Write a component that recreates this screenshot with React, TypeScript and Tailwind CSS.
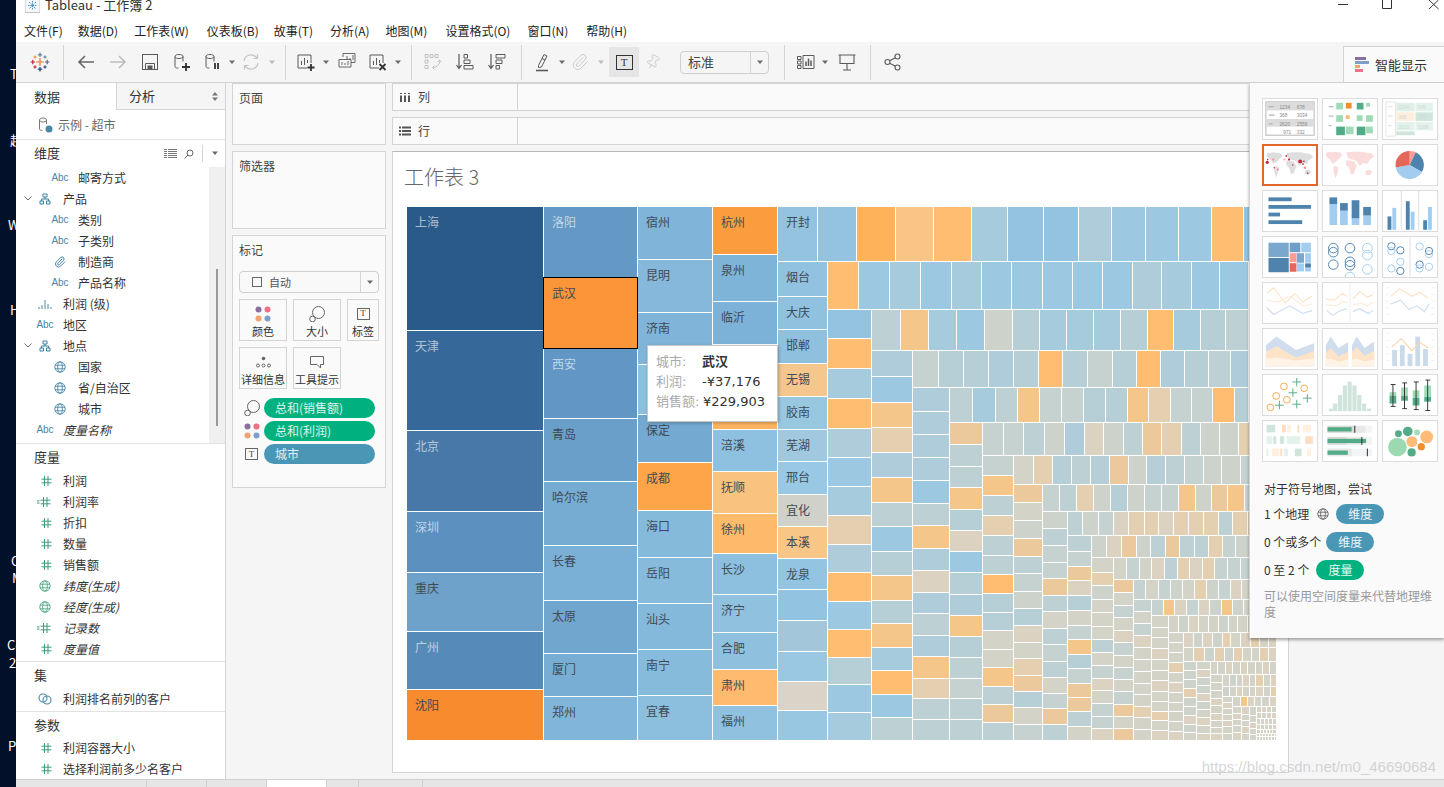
import { Paperclip, Pin } from "lucide-react";
import type { ReactNode } from "react";

const PALETTE: Record<string, string> = {
  b: "#93c3df",
  c: "#9cc9e1",
  d: "#a6cbdd",
  g: "#afccda",
  h: "#b6ced6",
  j: "#bdd0d3",
  k: "#c5d2cf",
  n: "#cdd2ca",
  m: "#d3d3c8",
  f: "#dcd2c1",
  e: "#e4cfb0",
  q: "#ebc99d",
  p: "#f5c68a",
  o: "#febd70",
  O: "#feb25a",
  P: "#f8c586",
};

type Strip = {
  dir: "r" | "c";
  a: number;
  b: number;
  start: number;
  ends: number[];
  colors: string | string[];
  labels?: string[];
};

const s = (
  dir: "r" | "c",
  a: number,
  b: number,
  start: number,
  ends: number[],
  colors: string | string[],
  labels?: string[],
): Strip => ({ dir, a, b, start, ends, colors, labels });

const STRIPS: Strip[] = [
  s("c", 407, 543, 207, [330, 430, 511, 572, 631, 689, 740],
    ["#295a89", "#36699a", "#4878a7", "#5b90bf", "#6ea2ca", "#568ab9", "#f88b2d"],
    ["上海", "天津", "北京", "深圳", "重庆", "广州", "沈阳"]),
  s("c", 544, 637, 207, [277, 348, 418, 481, 545, 600, 653, 696, 740],
    ["#6499c6", "#fa9639", "#6297c5", "#6a9fca", "#76abd2", "#7aafd6", "#71a6cf", "#79aed4", "#81b6da"],
    ["洛阳", "武汉", "西安", "青岛", "哈尔滨", "长春", "太原", "厦门", "郑州"]),
  s("c", 638, 712, 207, [259, 312, 364, 414, 462, 510, 557, 603, 649, 695, 740],
    ["#80b5d9", "#85b8db", "#80b4d9", "#8dbfdf", "#74a9d1", "#fda548", "#86bada", "#86bbdc", "#85b9db", "#87bbdc", "#8cbfde"],
    ["宿州", "昆明", "济南", "", "保定", "成都", "海口", "岳阳", "汕头", "南宁", "宜春"]),
  s("c", 713, 777, 207, [254, 301, 344, 387, 429, 471, 513, 553, 594, 632, 669, 705, 740],
    ["#fb9c3f", "#7fb4d9", "#7db2d8", "#88bbdc", "#fdb35f", "#8ec0df", "#f9c27f", "#feba6b", "#8dbfde", "#90c2e0", "#8fc1df", "#feba6e", "#90c2df"],
    ["杭州", "泉州", "临沂", "", "", "涪溪", "抚顺", "徐州", "长沙", "济宁", "合肥", "肃州", "福州"]),
  s("r", 207, 261, 778, [817, 856, 895, 933, 971, 1007, 1043, 1078, 1111, 1145, 1178, 1211, 1243, 1276],
    "bbOPodbbgcccob", ["开封"]),
  s("c", 778, 827, 262, [296, 329, 363, 396, 429, 461, 494, 526, 558, 589, 620, 651, 681, 710, 740],
    ["#91c2df", "#90c1df", "#8fc1df", "#f5c78c", "#98c8e0", "#a0c9e0", "#98c8e3", "#d0d1c8", "#f8c686", "#93c4e1", "#92c3e1", "#a3c6da", "#9ac8e2", "#dad4c8", "#97c7e1"],
    ["烟台", "大庆", "邯郸", "无锡", "胶南", "芜湖", "邢台", "宜化", "本溪", "龙泉"]),
  s("r", 262, 309, 828, [858, 889, 920, 951, 981, 1011, 1042, 1072, 1102, 1132, 1161, 1191, 1219, 1248, 1276], "ocdcdcccccgdcc"),
  s("c", 828, 871, 310, [338, 368, 398, 428, 457, 486, 515, 544, 572, 601, 629, 657, 684, 712, 740], "bodogcdegocohcd"),
  s("r", 310, 350, 872, [900, 928, 956, 984, 1012, 1039, 1066, 1093, 1120, 1147, 1173, 1200, 1225, 1248, 1276], "jpdcnhdddhodhjj"),
  s("c", 872, 912, 351, [376, 402, 427, 452, 477, 502, 526, 551, 575, 600, 623, 647, 670, 694, 717, 740], "gcpegpjchphpdocj"),
  s("r", 351, 387, 913, [938, 963, 988, 1013, 1038, 1062, 1087, 1112, 1136, 1160, 1184, 1208, 1230, 1248, 1276], "khhghohkhoghjgj"),
  s("c", 913, 949, 388, [411, 434, 457, 480, 503, 525, 548, 570, 592, 613, 635, 656, 678, 698, 719, 740], "ggggcjpgfgjgpejj"),
  s("r", 388, 422, 950, [972, 995, 1017, 1039, 1061, 1083, 1105, 1127, 1148, 1170, 1191, 1212, 1234, 1248, 1276], "jdjpkkhhpekkohh"),
  s("c", 950, 982, 423, [444, 466, 487, 509, 530, 551, 572, 594, 615, 636, 657, 678, 698, 719, 740], "qjjphfchgphjkjj"),
  s("r", 423, 455, 983, [1003, 1023, 1044, 1064, 1084, 1103, 1123, 1142, 1161, 1181, 1200, 1219, 1238, 1276], "kkjngfnjqejnne"),
  s("c", 983, 1013, 456, [475, 495, 515, 535, 555, 574, 593, 612, 630, 649, 667, 686, 704, 722, 740], "kpjejjohhmmpjqj"),
  s("r", 456, 484, 1014, [1033, 1052, 1071, 1090, 1109, 1128, 1146, 1165, 1184, 1203, 1221, 1240, 1276], "mehjhqnhjknnk"),
  s("c", 1014, 1042, 485, [502, 520, 538, 556, 573, 591, 608, 625, 642, 658, 675, 691, 707, 724, 740], "qmnqjknhfmeqhmk"),
  s("r", 485, 511, 1043, [1059, 1076, 1093, 1110, 1127, 1144, 1161, 1178, 1195, 1211, 1227, 1244, 1276], "kjenhnkkpnqpk"),
  s("c", 1043, 1067, 512, [528, 545, 562, 578, 595, 611, 628, 644, 661, 677, 693, 708, 724, 740], "njkkqjmjkjmkqj"),
  s("r", 512, 535, 1068, [1082, 1098, 1113, 1128, 1144, 1158, 1173, 1188, 1203, 1218, 1232, 1247, 1276], "jnkfeefeeejee"),
  s("c", 1068, 1091, 536, [551, 566, 580, 595, 610, 625, 639, 654, 668, 683, 697, 711, 726, 740], "jkqfhmkphkqqjm"),
  s("r", 536, 557, 1092, [1106, 1121, 1136, 1150, 1165, 1179, 1194, 1208, 1222, 1235, 1276], "nfqnjqjjekn"),
  s("c", 1092, 1113, 558, [572, 585, 599, 612, 626, 639, 652, 665, 678, 690, 703, 716, 728, 740], "menmmmjmkfmkkf"),
  s("r", 558, 579, 1114, [1126, 1139, 1151, 1164, 1177, 1189, 1202, 1214, 1227, 1240, 1276], "mkmfjefekkk"),
  s("c", 1114, 1133, 580, [592, 605, 617, 630, 642, 655, 667, 679, 691, 704, 716, 728, 740], "qmkmfkmkmkqmq"),
  s("r", 580, 599, 1134, [1145, 1158, 1170, 1182, 1194, 1206, 1218, 1230, 1241, 1276], "kmknmenkfm"),
  s("c", 1134, 1151, 600, [611, 623, 635, 647, 659, 671, 683, 694, 706, 717, 729, 740], "kmkfmmmmmemm"),
  s("r", 600, 615, 1152, [1163, 1174, 1186, 1198, 1209, 1221, 1232, 1243, 1276], "kpfkfnpnm"),
  s("c", 1152, 1168, 616, [627, 637, 648, 659, 670, 680, 691, 701, 711, 720, 730, 740], "mmmfmmfmmemf"),
  s("r", 616, 632, 1169, [1178, 1188, 1198, 1208, 1218, 1228, 1237, 1247, 1276], "mnfmmnmmm"),
  s("c", 1169, 1183, 633, [642, 652, 662, 672, 682, 692, 702, 711, 721, 731, 740], "mmmemfmmmmf"),
  s("r", 633, 647, 1184, [1193, 1202, 1212, 1222, 1230, 1240, 1250, 1259, 1268, 1276], "fnfnemfemf"),
  s("r", 648, 661, 1184, [1193, 1204, 1214, 1224, 1233, 1242, 1251, 1259, 1268, 1276], "menenemmef"),
  s("c", 1184, 1196, 662, [670, 679, 688, 697, 706, 715, 724, 732, 740], "nnnennfnm"),
  s("c", 1197, 1210, 662, [669, 677, 685, 693, 701, 709, 717, 725, 733, 740], "mfnnfnmfmf"),
  s("r", 662, 674, 1211, [1217, 1225, 1232, 1240, 1247, 1255, 1262, 1269, 1276], "mmfmfmmfm"),
  s("c", 1211, 1222, 675, [682, 690, 698, 705, 713, 720, 727, 733, 740], "mmmfmfmmf"),
  s("r", 675, 686, 1223, [1229, 1236, 1242, 1249, 1255, 1263, 1270, 1276], "mnmfmemf"),
  s("r", 687, 696, 1223, [1229, 1236, 1242, 1249, 1255, 1263, 1270, 1276], "nmfmmfme"),
  s("c", 1223, 1232, 697, [702, 708, 714, 720, 726, 733, 740], "mfmmfmm"),
  s("r", 697, 706, 1233, [1240, 1247, 1254, 1261, 1269, 1276], "mpfmmf"),
  s("c", 1233, 1241, 707, [713, 719, 725, 732, 740], "mfmmf"),
  s("c", 1242, 1249, 707, [714, 720, 726, 733, 740], "fmmfm"),
  s("c", 1250, 1256, 707, [715, 722, 728, 734, 740], "mmfmm"),
  s("r", 707, 712, 1257, [1261, 1266, 1271, 1276], "mfmm"),
  s("r", 713, 718, 1257, [1261, 1266, 1271, 1276], "fmmf"),
  s("r", 719, 724, 1257, [1260, 1264, 1268, 1272, 1276], "mmfmm"),
  s("r", 725, 729, 1257, [1260, 1264, 1268, 1272, 1276], "fmmmf"),
  s("r", 730, 733, 1257, [1260, 1263, 1266, 1269, 1272, 1276], "mmfmm"),
  s("r", 734, 736, 1257, [1259, 1262, 1265, 1268, 1271, 1274, 1276], "mfmmfm"),
  s("r", 737, 740, 1257, [1259, 1262, 1265, 1268, 1271, 1274, 1276], "mmmfmm"),
];

const LIGHT_LABELS = ["上海", "天津", "北京", "深圳", "广州", "洛阳", "西安"];

function Treemap() {
  const rects: ReactNode[] = [];
  const texts: ReactNode[] = [];
  STRIPS.forEach((st, i) => {
    let cur = st.start;
    st.ends.forEach((end, j) => {
      const raw = st.colors[j % st.colors.length];
      const fill = raw.length === 1 ? PALETTE[raw] : raw;
      const x = st.dir === "c" ? st.a : cur;
      const y = st.dir === "c" ? cur : st.a;
      const w = st.dir === "c" ? st.b - st.a : end - cur;
      const h = st.dir === "c" ? end - cur : st.b - st.a;
      rects.push(<rect key={`${i}-${j}`} x={x} y={y} width={w} height={h} fill={fill} />);
      const label = st.labels?.[j];
      if (label) {
        texts.push(
          <text
            key={label}
            x={x + 8}
            y={y + 20}
            fontSize={12}
            fill={LIGHT_LABELS.includes(label) ? "rgba(255,255,255,0.62)" : "#3f4a55"}
          >
            {label}
          </text>,
        );
      }
      cur = end + 1;
    });
  });
  return (
    <svg className="block" width={870} height={534} viewBox="407 207 870 534">
      <g shapeRendering="crispEdges">{rects}</g>
      <rect x={543.5} y={277.5} width={94} height={71} fill="none" stroke="#000" strokeWidth={1} shapeRendering="crispEdges" />
      {texts}
    </svg>
  );
}

/* ---- toolbar icons ---- */

function Ico({ children, w = 20, h = 20 }: { children: ReactNode; w?: number; h?: number }) {
  return (
    <svg width={w} height={h} viewBox={`0 0 ${w} ${h}`} fill="none" stroke="#5a5a5a" strokeWidth={1}>
      {children}
    </svg>
  );
}

function Plus({ x, y, r, c }: { x: number; y: number; r: number; c: string }) {
  return <path d={`M${x - r} ${y}H${x + r}M${x} ${y - r}V${y + r}`} stroke={c} strokeWidth={1.2} fill="none" />;
}

function TableauLogo() {
  return (
    <svg width={20} height={20} viewBox="0 0 20 20">
      <Plus x={10} y={10} r={4} c="#e8762b" />
      <Plus x={10} y={2.8} r={2.2} c="#5b879b" />
      <Plus x={10} y={17.2} r={2.2} c="#1f447b" />
      <Plus x={2.8} y={10} r={2.2} c="#c72037" />
      <Plus x={17.2} y={10} r={2.2} c="#5b6591" />
      <Plus x={5} y={5} r={1.6} c="#eb9129" />
      <Plus x={15} y={5} r={1.6} c="#59879b" />
      <Plus x={5} y={15} r={1.6} c="#c72037" />
      <Plus x={15} y={15} r={1.6} c="#1f447b" />
    </svg>
  );
}

function Cylinder() {
  return <path d="M3 4.5C3 3 5 2.5 7 2.5s4 .5 4 2v5M3 4.5c0 1.5 2 2 4 2s4-.5 4-2M3 4.5v10c0 1 1 1.5 2.5 1.5h1" />;
}

function BarsBox() {
  return <path d="M11 16H2V3h13v8M5.5 13V9M8.5 13V6M11.5 11V8" />;
}

function Caret({ light }: { light?: boolean }) {
  return (
    <svg width={8} height={5} viewBox="0 0 8 5" className="shrink-0">
      <path d="M1 0.5h6L4 4z" fill={light ? "#bdbdbd" : "#6a6a6a"} />
    </svg>
  );
}

function Sep({ className }: { className: string }) {
  return <div className={`h-[35px] w-px shrink-0 bg-[#d4d4d4] ${className}`} />;
}

function Toolbar() {
  return (
    <div className="flex h-[41px] shrink-0 items-center border-b border-[#d4d4d4] bg-[#f5f5f5]">
      <div className="flex w-[47px] shrink-0 justify-center"><TableauLogo /></div>
      <Sep className="" />
      <div className="ml-[6px] flex w-[32px] shrink-0 justify-center">
        <svg width={18} height={16} viewBox="0 0 18 16" fill="none" stroke="#666" strokeWidth={1.6}><path d="M17 8H2M8 2L2 8l6 6" /></svg>
      </div>
      <div className="flex w-[32px] shrink-0 justify-center">
        <svg width={18} height={16} viewBox="0 0 18 16" fill="none" stroke="#bdbdbd" strokeWidth={1.6}><path d="M1 8h15M10 2l6 6-6 6" /></svg>
      </div>
      <div className="flex w-[32px] shrink-0 justify-center">
        <Ico w={18} h={18}>
          <rect x={1.5} y={1.5} width={15} height={15} />
          <path d="M4.5 16.5V10.5h9v6" />
          <rect x={6.5} y={12.5} width={5} height={4} fill="#5a5a5a" stroke="none" />
        </Ico>
      </div>
      <div className="flex w-[31px] shrink-0 justify-center">
        <Ico>
          <Cylinder />
          <path d="M14 11v8M10 15h8" stroke="#333" strokeWidth={1.8} />
        </Ico>
      </div>
      <div className="flex w-[31px] shrink-0 justify-center">
        <Ico>
          <Cylinder />
          <path d="M12 11v6M15 11v6" stroke="#333" strokeWidth={1.8} />
        </Ico>
      </div>
      <div className="flex w-[8px] shrink-0 justify-center"><Caret /></div>
      <div className="flex w-[30px] shrink-0 justify-center">
        <Ico w={18} h={18}>
          <path d="M2 8a7 7 0 0 1 12-4l1.5 1.5M16 10a7 7 0 0 1-12 4L2.5 12.500M15.500 1.500v4h-4M2.500 16.500v-4h4" stroke="#c4c4c4" strokeWidth={1.2} />
        </Ico>
      </div>
      <div className="ml-[2px] flex w-[8px] shrink-0 justify-center"><Caret light /></div>
      <Sep className="ml-[9px]" />
      <div className="ml-[4px] flex w-[32px] shrink-0 justify-center">
        <Ico>
          <BarsBox />
          <path d="M15 12v7M11.500 15.500h7" stroke="#333" strokeWidth={1.8} />
        </Ico>
      </div>
      <div className="flex w-[8px] shrink-0 justify-center"><Caret /></div>
      <div className="ml-[1px] flex w-[31px] shrink-0 justify-center">
        <Ico>
          <path d="M6 5V1.500h12v9h-4M2 7.500h12V15H2zM5 13v-3M8 13v-2M11 13v-4M10 8V4M13 8V6M16 8V3" strokeWidth={0.9} />
        </Ico>
      </div>
      <div className="flex w-[32px] shrink-0 justify-center">
        <Ico>
          <BarsBox />
          <path d="M11.500 12l6 6M17.500 12l-6 6" stroke="#333" strokeWidth={1.8} />
        </Ico>
      </div>
      <div className="flex w-[8px] shrink-0 justify-center"><Caret /></div>
      <Sep className="ml-[9px]" />
      <div className="ml-[5px] flex w-[32px] shrink-0 justify-center">
        <Ico>
          <path d="M2 2.500h3v3H2zM7 2.500h3v3H7zM12 2.500h3v3h-3zM2 8h3v3H2zM2 13.500h3v3H2z" stroke="#c0c0c0" />
          <path d="M16.500 8c.8 4-2 7-6.500 7.500M11.500 13.500L9.500 15.500l2 2M15 10l1.500-2 1.500 2" stroke="#c0c0c0" />
        </Ico>
      </div>
      <div className="flex w-[32px] shrink-0 justify-center">
        <Ico>
          <path d="M4 2v14M1.500 13L4 16.500 6.500 13" strokeWidth={1.2} />
          <path d="M9 2.500h3.500v3.500H9zM9 8h6v3.500H9zM9 13.500h9v3.500H9z" />
        </Ico>
      </div>
      <div className="flex w-[32px] shrink-0 justify-center">
        <Ico>
          <path d="M4 2v14M1.500 13L4 16.500 6.500 13" strokeWidth={1.2} />
          <path d="M9 2.500h9v3.500H9zM9 8h6v3.500H9zM9 13.500h3.500v3.500H9z" />
        </Ico>
      </div>
      <Sep className="ml-[8px]" />
      <div className="ml-[6px] flex w-[30px] shrink-0 justify-center">
        <Ico>
          <path d="M5.500 13.500L11 2.500l3 1.500-5.500 11-3 .5zM9 6.500l3 1.500" />
          <path d="M3 18.500h12" strokeWidth={1.6} />
        </Ico>
      </div>
      <div className="flex w-[8px] shrink-0 justify-center"><Caret /></div>
      <div className="flex w-[28px] shrink-0 justify-center">
        <Paperclip size={18} color="#c6c6c6" strokeWidth={1.2} />
      </div>
      <div className="ml-[3px] flex w-[8px] shrink-0 justify-center"><Caret light /></div>
      <div className="ml-[4px] flex h-[30px] w-[30px] shrink-0 items-center justify-center bg-[#e6e6e6]">
        <div className="flex h-[15px] w-[17px] items-center justify-center border border-[#333] font-['Liberation_Serif',serif] text-[11px] leading-none text-[#333]">T</div>
      </div>
      <div className="flex w-[28px] shrink-0 justify-center">
        <Pin size={16} color="#c6c6c6" strokeWidth={1.2} className="rotate-[30deg]" />
      </div>
      <div className="ml-[13px] flex h-[23px] w-[89px] shrink-0 items-center rounded-sm border border-[#cfcfcf] bg-[#f5f5f5]">
        <span className="flex-1 pl-[7px] text-[13px] text-[#444]">标准</span>
        <div className="flex h-full w-[18px] items-center justify-center border-l border-[#d4d4d4]"><Caret /></div>
      </div>
      <Sep className="ml-[15px]" />
      <div className="ml-[6px] flex w-[30px] shrink-0 justify-center">
        <Ico>
          <path d="M1.500 4.500h3.500v3H1.500zM1.500 9h3.500v3H1.500zM1.500 13.500h3.500v3H1.500zM7 3.500h11v13H7z" />
          <path d="M10 14V9.500M12.500 14V6.500M15 14V8.500" strokeWidth={1.5} />
        </Ico>
      </div>
      <div className="flex w-[8px] shrink-0 justify-center"><Caret /></div>
      <div className="ml-[2px] flex w-[32px] shrink-0 justify-center">
        <Ico>
          <path d="M1.500 3h17M3 3v8.500h14V3M10 11.500v6.500M6 18h8" strokeWidth={1.1} />
        </Ico>
      </div>
      <Sep className="ml-[7px]" />
      <div className="ml-[6px] flex w-[32px] shrink-0 justify-center">
        <Ico>
          <circle cx={14.500} cy={4.500} r={2.500} strokeWidth={1.1} />
          <circle cx={14.500} cy={15.500} r={2.500} strokeWidth={1.1} />
          <circle cx={4.500} cy={10} r={2.500} strokeWidth={1.1} />
          <path d="M6.700 8.800l5.600-3.100M6.700 11.200l5.600 3.100" strokeWidth={1.1} />
        </Ico>
      </div>
      <div className="ml-auto flex h-[36px] w-[101px] shrink-0 items-center gap-[6px] self-end border-l border-t border-[#d4d4d4] bg-[#fafafa] pl-[11px]">
        <div className="flex flex-col gap-px">
          <div className="h-[3px] w-[11px] bg-[#8a6f9e]" />
          <div className="h-[3px] w-[14px] bg-[#7f9fc9]" />
          <div className="h-[3px] w-[5px] bg-[#f0a46c]" />
          <div className="h-[3px] w-[8px] bg-[#ef7088]" />
        </div>
        <span className="text-[13px] text-[#333]">智能显示</span>
      </div>
    </div>
  );
}

/* ---- data pane ---- */

function Abc() {
  return <span className="font-['Liberation_Sans',sans-serif] text-[10px] leading-none text-[#4a86a6]">Abc</span>;
}

function Hier() {
  return (
    <svg width={12} height={12} viewBox="0 0 12 12" fill="none" stroke="#3d7fa0">
      <path d="M4 1h4v3H4zM1 8h3.500v3H1zM7.500 8H11v3H7.500zM6 4v2M2.500 8V6h7v2" />
    </svg>
  );
}

function Globe({ c = "#4a88a8" }: { c?: string }) {
  return (
    <svg width={12} height={12} viewBox="0 0 12 12" fill="none" stroke={c} strokeWidth={0.9}>
      <circle cx={6} cy={6} r={5.200} />
      <ellipse cx={6} cy={6} rx={2.300} ry={5.200} />
      <path d="M1 4.200h10M1 7.800h10" />
    </svg>
  );
}

function Hash({ eq }: { eq?: boolean }) {
  return (
    <svg width={14} height={10} viewBox="0 0 14 10" fill="none" stroke="#3d9c7c" className={eq ? "-ml-[3px]" : ""}>
      <path d="M6.500 0v10M10 0v10M3.500 3.200h10M3.500 6.800h10" />
      {eq && <path d="M0 3.900h2.500M0 6.100h2.500" />}
    </svg>
  );
}

function LevelBars() {
  return (
    <svg width={14} height={10} viewBox="0 0 14 10" stroke="#4a88a8">
      <path d="M1 10V8M4 10V6M7 10V1M10 10V5M13 10V8" />
    </svg>
  );
}

function SetIcon() {
  return (
    <svg width={14} height={12} viewBox="0 0 14 12" fill="none" stroke="#4a88a8" strokeWidth={1.1}>
      <circle cx={5} cy={5} r={4} />
      <circle cx={9} cy={7} r={4} />
    </svg>
  );
}

function Chevron() {
  return (
    <svg width={8} height={5} viewBox="0 0 8 5" fill="none" stroke="#666">
      <path d="M.5.500L4 4 7.500.500" />
    </svg>
  );
}

function Row({
  icon,
  label,
  nested,
  italic,
  open,
}: {
  icon: ReactNode;
  label: string;
  nested?: boolean;
  italic?: boolean;
  open?: boolean;
}) {
  return (
    <div className="flex h-[21px] items-center pl-[8px]">
      <div className="flex w-[12px] shrink-0 items-center">{open && <Chevron />}</div>
      {nested && <div className="w-[15px] shrink-0" />}
      <div className="mr-[9px] flex w-[18px] shrink-0 items-center justify-center">{icon}</div>
      <span className={`whitespace-nowrap text-[12px] text-[#333] ${italic ? "italic" : ""}`}>{label}</span>
    </div>
  );
}

function Header({ label, className }: { label: string; className: string }) {
  return <div className={`flex items-center pl-[18px] text-[13px] text-[#333] ${className}`}>{label}</div>;
}

function DataPane() {
  return (
    <div className="h-full w-[210px] shrink-0 overflow-hidden border-r border-[#d4d4d4] bg-white">
      <div className="flex h-[27px]">
        <div className="flex w-[100px] items-center pl-[18px] text-[13px] text-[#333]">数据</div>
        <div className="flex flex-1 items-center justify-between border-b border-l border-[#d4d4d4] bg-[#f5f5f5] pl-[12px] pr-[7px] text-[13px] text-[#333]">
          <span>分析</span>
          <svg width={6} height={9} viewBox="0 0 6 9" fill="#777"><path d="M0 3.500L3 0l3 3.500zM0 5.500L3 9l3-3.500z" /></svg>
        </div>
      </div>
      <div className="flex h-[30px] items-center gap-[3px] border-b border-[#e2e2e2] pl-[22px] text-[12px] text-[#666]">
        <svg width={17} height={16} viewBox="0 0 17 16" fill="none" stroke="#777">
          <path d="M1.500 3c0-1.500 2-2 3.500-2s3.500.5 3.500 2v4M1.500 3c0 1.500 2 2 3.500 2s3.500-.5 3.500-2M1.500 3v9c0 1 1.500 1.500 3 1.500" />
          <circle cx={11} cy={12} r={3.500} fill="#4a88a8" stroke="none" />
        </svg>
        <span>示例 - 超市</span>
      </div>
      <div className="flex h-[27px] items-center pr-[6px]">
        <Header label="维度" className="flex-1 pb-[1px]" />
        <svg width={13} height={9} viewBox="0 0 13 9" stroke="#777" className="mr-[7px]"><path d="M0 .5h3M0 2.500h3M0 4.500h3M0 6.500h3M0 8.500h3M4 .5h9M4 2.500h9M4 4.500h9M4 6.500h9M4 8.500h9" /></svg>
        <svg width={10} height={10} viewBox="0 0 10 10" fill="none" stroke="#666" className="mr-[8px]"><circle cx={6} cy={4} r={3} /><path d="M4 6L.5 9.500" /></svg>
        <div className="mr-[8px] h-[17px] w-px bg-[#d4d4d4]" />
        <Caret />
      </div>
      <div className="flex h-[277px] border-b border-[#e2e2e2]">
        <div className="flex-1">
          <Row icon={<Abc />} nested label="邮寄方式" />
          <Row icon={<Hier />} open label="产品" />
          <Row icon={<Abc />} nested label="类别" />
          <Row icon={<Abc />} nested label="子类别" />
          <Row
            icon={<Paperclip size={12} color="#4a88a8" />}
            nested
            label="制造商"
          />
          <Row icon={<Abc />} nested label="产品名称" />
          <Row icon={<LevelBars />} label="利润 (级)" />
          <Row icon={<Abc />} label="地区" />
          <Row icon={<Hier />} open label="地点" />
          <Row icon={<Globe />} nested label="国家" />
          <Row icon={<Globe />} nested label="省/自治区" />
          <Row icon={<Globe />} nested label="城市" />
          <Row icon={<Abc />} italic label="度量名称" />
        </div>
        <div className="w-[16px] shrink-0 bg-[#f0f0f0] pl-[7px] pt-[102px]">
          <div className="h-[157px] w-[2px] bg-[#999]" />
        </div>
      </div>
      <Header label="度量" className="h-[26px]" />
      <div className="border-b border-[#e2e2e2] pb-[2px]">
        <Row icon={<Hash />} label="利润" />
        <Row icon={<Hash eq />} label="利润率" />
        <Row icon={<Hash />} label="折扣" />
        <Row icon={<Hash />} label="数量" />
        <Row icon={<Hash />} label="销售额" />
        <Row icon={<Globe c="#4fa885" />} italic label="纬度(生成)" />
        <Row icon={<Globe c="#4fa885" />} italic label="经度(生成)" />
        <Row icon={<Hash eq />} italic label="记录数" />
        <Row icon={<Hash />} italic label="度量值" />
      </div>
      <Header label="集" className="h-[26px]" />
      <div className="border-b border-[#e2e2e2] pb-[2px]">
        <Row icon={<SetIcon />} label="利润排名前列的客户" />
      </div>
      <Header label="参数" className="h-[25px]" />
      <Row icon={<Hash />} label="利润容器大小" />
      <Row icon={<Hash />} label="选择利润前多少名客户" />
    </div>
  );
}

/* ---- marks card ---- */

function ColorDots() {
  return (
    <svg width={16} height={16} viewBox="0 0 16 16">
      <circle cx={3.500} cy={3.500} r={3} fill="#8a6f9e" />
      <circle cx={12.500} cy={3.500} r={3} fill="#ef6f84" />
      <circle cx={3.500} cy={12.500} r={3} fill="#f0a270" />
      <circle cx={12.500} cy={12.500} r={3} fill="#7f9fc9" />
    </svg>
  );
}

function SizeIcon() {
  return (
    <svg width={16} height={16} viewBox="0 0 16 16" fill="none" stroke="#666">
      <circle cx={9.500} cy={6.500} r={6} />
      <circle cx={3.500} cy={13} r={2.800} fill="#fafafa" />
    </svg>
  );
}

function TIcon() {
  return (
    <div className="flex h-[12px] w-[13px] items-center justify-center border border-[#666] font-['Liberation_Serif',serif] text-[9px] leading-none text-[#444]">T</div>
  );
}

function MarkBtn({ icon, label, className }: { icon: ReactNode; label: string; className: string }) {
  return (
    <div className={`flex h-[42px] flex-col items-center justify-between border border-[#d4d4d4] pb-[2px] pt-[5px] ${className}`}>
      <div className="flex h-[17px] items-center">{icon}</div>
      <span className="whitespace-nowrap text-[11px] leading-[14px] text-[#333]">{label}</span>
    </div>
  );
}

function Pill({ label, blue }: { label: string; blue?: boolean }) {
  return (
    <div className={`flex h-[20px] w-[111px] items-center rounded-full pl-[11px] text-[12px] text-white/85 ${blue ? "bg-[#4a96b5]" : "bg-[#00b180]"}`}>
      {label}
    </div>
  );
}

function MiddlePane() {
  return (
    <div className="h-full w-[166px] shrink-0 px-[6px]">
      <div className="h-[62px] border border-[#d4d4d4] bg-[#fafafa] pl-[6px] pt-[5px] text-[12px] text-[#444]">页面</div>
      <div className="mt-[6px] h-[78px] border border-[#d4d4d4] bg-[#fafafa] pl-[6px] pt-[5px] text-[12px] text-[#444]">筛选器</div>
      <div className="mt-[6px] h-[253px] border border-[#d4d4d4] bg-[#fafafa] px-[6px]">
        <div className="flex h-[35px] items-center pb-[7px] text-[12px] text-[#444]">标记</div>
        <div className="flex h-[22px] items-center rounded-sm border border-[#cfcfcf] bg-[#f9f9f9]">
          <div className="ml-[12px] h-[10px] w-[10px] border border-[#666]" />
          <span className="ml-[7px] flex-1 text-[11px] text-[#555]">自动</span>
          <div className="flex h-full w-[18px] items-center justify-center border-l border-[#d4d4d4]"><Caret /></div>
        </div>
        <div className="mt-[6px] flex gap-[6px]">
          <MarkBtn icon={<ColorDots />} label="颜色" className="w-[48px]" />
          <MarkBtn icon={<SizeIcon />} label="大小" className="w-[48px]" />
          <MarkBtn icon={<TIcon />} label="标签" className="w-[32px]" />
        </div>
        <div className="mt-[6px] flex gap-[6px]">
          <MarkBtn
            icon={
              <svg width={15} height={12} viewBox="0 0 15 12" fill="none" stroke="#666">
                <circle cx={7.500} cy={2.500} r={1.800} fill="#666" stroke="none" />
                <circle cx={2} cy={9.500} r={1.500} />
                <circle cx={7.500} cy={9.500} r={1.500} />
                <circle cx={13} cy={9.500} r={1.500} />
              </svg>
            }
            label="详细信息"
            className="w-[48px]"
          />
          <MarkBtn
            icon={
              <svg width={16} height={14} viewBox="0 0 16 14" fill="none" stroke="#666">
                <path d="M1.500 1.500h13v8h-3v3.500L8 9.500H1.500z" />
              </svg>
            }
            label="工具提示"
            className="w-[48px]"
          />
        </div>
        <div className="mt-[9px] flex flex-col gap-[3px]">
          <div className="flex items-center">
            <div className="flex w-[25px] justify-center"><SizeIcon /></div>
            <Pill label="总和(销售额)" />
          </div>
          <div className="flex items-center">
            <div className="flex w-[25px] justify-center"><ColorDots /></div>
            <Pill label="总和(利润)" />
          </div>
          <div className="flex items-center">
            <div className="flex w-[25px] justify-center"><TIcon /></div>
            <Pill blue label="城市" />
          </div>
        </div>
      </div>
    </div>
  );
}

/* ---- show me thumbs ---- */

const DARK = "#4e83ae";
const LITE = "#a3cdf0";
const GREEN = "#54ab88";
const MINT = "#9fdcb6";

function Thumb({ children, active }: { children: ReactNode; active?: boolean }) {
  return (
    <div className={`h-[42px] w-[56px] bg-white ${active ? "border-2 border-[#e0672d]" : "border border-[#dcdcdc]"}`}>
      <svg className="h-full w-full" viewBox="0 0 56 42" preserveAspectRatio="none">
        {children}
      </svg>
    </div>
  );
}

function World({ fill }: { fill: string }) {
  return (
    <g fill={fill}>
      <path d="M3 8l7-1 8 1 2 3-4 4-3 3-3 2-3-5-4-3z" />
      <path d="M11 22l5 1-1 7-2 5-2-7z" />
      <path d="M24 8l6-1h10l10 2 3 3-5 4-2 4-4-1-4 3-3-5-5-2-4-1z" />
      <path d="M24 16l8 1 3 5-3 8-3 1-2-7-3-3z" />
      <path d="M44 27l5-1 2 3-3 3-4-1z" />
    </g>
  );
}

function Poly({ pts, c, w = 1.200 }: { pts: string; c: string; w?: number }) {
  return <polyline points={pts} fill="none" stroke={c} strokeWidth={w} />;
}

function ThumbGrid() {
  return (
    <div className="grid grid-cols-[56px_56px_56px] gap-x-[4px] gap-y-[4px]">
      <Thumb>
        <rect x={3} y={3} width={50} height={35} fill="#fff" stroke="#b3b3b3" />
        <rect x={3.500} y={3.500} width={49} height={8.500} fill="#dcdcdc" />
        <rect x={3.500} y={21} width={49} height={8} fill="#dcdcdc" />
        <path d="M6 8h5M6 17h6M6 26h4" stroke="#b3b3b3" strokeWidth={1.300} />
        <g fontSize={5} fill="#8a8a8a" fontFamily="Liberation Sans, sans-serif">
          <text x={17} y={10}>1234</text><text x={35} y={10}>678</text>
          <text x={17} y={19}>368</text><text x={35} y={19}>3034</text>
          <text x={17} y={28}>2620</text><text x={35} y={28}>2556</text>
          <text x={21} y={37}>971</text><text x={35} y={37}>332</text>
        </g>
      </Thumb>
      <Thumb>
        <path d="M6 8h5M6 18h5M6 28h3" stroke="#bbb" strokeWidth={1.300} />
        <rect x={13.700} y={4} width={7} height={7} fill={MINT} />
        <rect x={23.700} y={4} width={6} height={6} fill="#f28e2b" />
        <rect x={35} y={4} width={7} height={7} fill={GREEN} />
        <rect x={44.700} y={4} width={4} height={4} fill={MINT} />
        <rect x={13.700} y={17} width={7} height={7} fill={MINT} />
        <rect x={23.700} y={17} width={4} height={4} fill="#ffbb78" />
        <rect x={35} y={17} width={6} height={6} fill={MINT} />
        <rect x={44.700} y={17} width={7} height={7} fill={MINT} />
        <rect x={13.700} y={29} width={9} height={9} fill={GREEN} />
        <rect x={23.700} y={29} width={8} height={8} fill={MINT} />
        <rect x={35} y={29} width={9} height={9} fill={GREEN} />
        <rect x={44.700} y={29} width={7} height={7} fill={MINT} />
      </Thumb>
      <Thumb>
        <path d="M5 8h5M5 18h5M5 28h4" stroke="#e6e6e6" strokeWidth={1.300} />
        <path d="M3 3v36h10V3z" fill="none" stroke="#e6e6e6" />
        <rect x={13.700} y={4} width={19} height={9} fill="#e0f0e8" />
        <rect x={33.700} y={4} width={18} height={9} fill="#e3f2ea" />
        <rect x={13.700} y={14} width={19} height={9} fill="#ffeedd" />
        <rect x={33.700} y={14} width={18} height={9} fill="#cfe5dc" />
        <rect x={13.700} y={24} width={19} height={9} fill="#e3f2ea" />
        <rect x={33.700} y={24} width={18} height={9} fill="#e3f2ea" />
        <rect x={13.700} y={34} width={19} height={4} fill="#cfe5dc" />
        <g fontSize={5} fill="#cddcd4" fontFamily="Liberation Sans, sans-serif">
          <text x={16} y={11}>1234</text><text x={36} y={11}>546</text>
          <text x={16} y={21}>368</text><text x={36} y={21}>383</text>
          <text x={16} y={31}>2620</text><text x={36} y={31}>5168</text>
        </g>
      </Thumb>
      <Thumb active>
        <World fill="#dedede" />
        <g fill="#c72a3e">
          <circle cx={3.500} cy={18} r={1.800} /><circle cx={4} cy={15} r={0.900} /><circle cx={24} cy={11} r={1} /><circle cx={27} cy={15} r={1.200} />
          <circle cx={39} cy={17} r={2.200} /><circle cx={43} cy={17} r={0.900} /><circle cx={42} cy={20} r={1} /><circle cx={11} cy={24} r={0.800} />
          <circle cx={47} cy={30} r={0.900} /><circle cx={31} cy={21} r={0.800} />
        </g>
        <g fill="#f38f94">
          <circle cx={10} cy={15} r={1.200} /><circle cx={22} cy={15} r={1} /><circle cx={15} cy={26} r={1.200} /><circle cx={44} cy={24} r={1.400} />
        </g>
      </Thumb>
      <Thumb><World fill="#fadcdc" /></Thumb>
      <Thumb>
        <path d="M27.700 21V6.300A14.700 14.700 0 0 1 33.900 7.700z" fill="#ff9d94" />
        <path d="M27.700 21L33.900 7.700A14.700 14.700 0 0 1 40.400 28.350z" fill={DARK} />
        <path d="M27.700 21L40.400 28.350A14.700 14.700 0 0 1 13.200 23.550z" fill={LITE} />
        <path d="M27.700 21L13.200 23.550A14.700 14.700 0 0 1 27.700 6.300z" fill="#e5675c" />
      </Thumb>
      <Thumb>
        <g fill={DARK}>
          <rect x={5.700} y={6.700} width={24} height={4} />
          <rect x={5.700} y={14.700} width={44} height={4} />
          <rect x={5.700} y={22.700} width={12} height={4} />
          <rect x={5.700} y={30.700} width={35} height={4} />
        </g>
      </Thumb>
      <Thumb>
        <g fill={LITE}>
          <rect x={6.700} y={13.700} width={8} height={22} />
          <rect x={17.700} y={20.700} width={8} height={15} />
          <rect x={29.700} y={28.700} width={8} height={7} />
          <rect x={41.700} y={25.700} width={8} height={10} />
        </g>
        <g fill={DARK}>
          <rect x={6.700} y={6.700} width={8} height={7} />
          <rect x={17.700} y={12.700} width={8} height={8} />
          <rect x={29.700} y={9.700} width={8} height={19} />
          <rect x={41.700} y={16.700} width={8} height={9} />
        </g>
      </Thumb>
      <Thumb>
        <path d="M19 0v41M37 0v41" stroke="#dcdcdc" />
        <g fill={DARK}>
          <rect x={4.700} y={26.700} width={4} height={14} />
          <rect x={23.700} y={10.700} width={4} height={30} />
          <rect x={41.700} y={30.700} width={4} height={10} />
        </g>
        <g fill={LITE}>
          <rect x={9.700} y={17.700} width={4} height={23} />
          <rect x={28.700} y={21.700} width={4} height={19} />
          <rect x={46.700} y={16.700} width={4} height={24} />
        </g>
      </Thumb>
      <Thumb>
        <rect x={5.700} y={6} width={21} height={15} fill="#7aa7cc" />
        <rect x={5.700} y={22} width={21} height={15} fill={DARK} />
        <rect x={27.700} y={6} width={11} height={10} fill="#6f9fc8" />
        <rect x={39.700} y={6} width={10} height={10} fill={LITE} />
        <rect x={27.700} y={17} width={7} height={9.500} fill="#ff9d94" />
        <rect x={27.700} y={27.500} width={7} height={9} fill="#e5675c" />
        <rect x={35} y={17} width={7.500} height={10} fill="#7aa7cc" />
        <rect x={43.700} y={17} width={6} height={10} fill={LITE} />
        <rect x={35} y={27.700} width={7.500} height={8.500} fill={LITE} />
        <rect x={43.700} y={27.700} width={6} height={4.500} fill={DARK} />
        <rect x={43.700} y={32.700} width={6} height={3.500} fill={LITE} />
      </Thumb>
      <Thumb>
        <g fill="none" strokeWidth={1}>
          <g stroke={DARK}>
            <circle cx={10.700} cy={11.700} r={5} /><circle cx={10.700} cy={16} r={5} /><circle cx={28} cy={11.700} r={5} />
            <circle cx={10.700} cy={29} r={5} /><circle cx={28} cy={26} r={5} /><circle cx={28} cy={29.700} r={5} />
          </g>
          <g stroke={LITE}>
            <circle cx={46} cy={11.700} r={5} /><circle cx={46} cy={19} r={5} /><circle cx={46} cy={34} r={5} /><circle cx={28} cy={42} r={5} />
          </g>
        </g>
      </Thumb>
      <Thumb>
        <path d="M28 0v41" stroke="#dcdcdc" />
        <g fill="none" strokeWidth={1}>
          <g stroke={DARK}>
            <circle cx={8.700} cy={9.700} r={3.800} /><circle cx={18} cy={14} r={3.800} /><circle cx={47.700} cy={14.700} r={3.800} />
            <circle cx={18} cy={35.700} r={3.800} /><circle cx={38} cy={29} r={3.800} />
          </g>
          <g stroke={LITE}>
            <circle cx={8.700} cy={14.700} r={3.800} /><circle cx={38} cy={10} r={3.800} /><circle cx={47.700} cy={18} r={3.800} />
            <circle cx={18} cy={26} r={3.800} /><circle cx={8.700} cy={33} r={3.800} /><circle cx={38} cy={33} r={3.800} /><circle cx={47.700} cy={31.300} r={3.800} />
          </g>
        </g>
      </Thumb>
      <Thumb>
        <Poly pts="4,11 11,5 23,21 33,11 41,20 51,14" c="#fde3c8" />
        <Poly pts="4,18 15,20 28,14 42,24 51,22" c="#fdecd9" />
        <Poly pts="4,26 11,33 28,24 41,32 51,29" c="#cfdded" />
      </Thumb>
      <Thumb>
        <path d="M28 0v41" stroke="#eeeeee" />
        <Poly pts="3,17 12,18 20,11 25,14" c="#fde3c8" />
        <Poly pts="31,17 38,9 46,15 52,12" c="#fde3c8" />
        <Poly pts="3,23 14,24 20,19 25,21" c="#fdecd9" />
        <Poly pts="31,23 40,21 46,24 52,20" c="#fdecd9" />
        <Poly pts="4,29 10,34 18,29 25,27" c="#cfdded" />
        <Poly pts="31,30 38,27 47,32 52,29" c="#cfdded" />
      </Thumb>
      <Thumb>
        <path d="M3 5h3M3 12h3M3 19h3M3 26h3M3 33h3M50 5h3M50 12h3M50 19h3M50 26h3M50 33h3" stroke="#eeeeee" />
        <Poly pts="8,14 17,6 30,14 38,10 47,16" c="#fde3c8" />
        <Poly pts="8,22 18,18 27,28 35,24 43,30 48,22" c="#cfdded" />
      </Thumb>
      <Thumb>
        <path d="M3 17l11-9 20 14 19-7v24H3z" fill="#cfdded" />
        <path d="M3 24l11-6 20 12 19-7v16H3z" fill="#fde3c8" />
        <path d="M3 31l11-1 20 3 19-2v8H3z" fill="#fff3e6" />
      </Thumb>
      <Thumb>
        <path d="M3 17l5-9 8 12 10-6v25H3z" fill="#cfdded" />
        <path d="M30 17l5-9 8 12 10-7v26H30z" fill="#cfdded" />
        <path d="M3 25l5-5 8 9 10-5v15H3z" fill="#fde3c8" />
        <path d="M30 24l5-5 8 9 10-5v16H30z" fill="#fde3c8" />
        <path d="M3 32l5-1 8 3 10-2v7H3z" fill="#fff3e6" />
        <path d="M30 32l5-1 8 3 10-2v7H30z" fill="#fff3e6" />
      </Thumb>
      <Thumb>
        <path d="M3 5h3M3 12h3M3 19h3M3 26h3M3 33h3M50 5h3M50 12h3M50 19h3M50 26h3M50 33h3" stroke="#eeeeee" />
        <g fill="#cbdae9">
          <rect x={9.500} y={22} width={5} height={17} />
          <rect x={17.500} y={17} width={5} height={22} />
          <rect x={25.500} y={26} width={5} height={13} />
          <rect x={33.500} y={8} width={5} height={31} />
          <rect x={41.500} y={21} width={5} height={18} />
        </g>
        <Poly pts="9,19 19,10 30,23 38,14 47,20" c="#fbd6ad" />
      </Thumb>
      <Thumb>
        <g fill="none" stroke="#f9a44a" strokeWidth={1}>
          <circle cx={21.700} cy={12} r={3.500} /><circle cx={42.700} cy={14} r={3.500} /><circle cx={13.700} cy={22} r={3.500} />
          <circle cx={24.700} cy={26} r={3.500} /><circle cx={7.700} cy={34} r={3.500} />
        </g>
        <path d="M35 3v9M30.500 7.300h9M31 14v9M26.500 18.700h9M46 20v9M41.500 24.300h9M17 27v9M12.500 31.700h9M35 26v9M30.500 30.700h9" stroke={GREEN} fill="none" />
      </Thumb>
      <Thumb>
        <g fill="#cfe5dc">
          <rect x={6} y={35.300} width={4.300} height={2.700} />
          <rect x={10.500} y={30} width={4.300} height={8} />
          <rect x={15.500} y={21} width={4.300} height={17} />
          <rect x={20.500} y={11} width={4.300} height={27} />
          <rect x={25.500} y={7} width={4.300} height={31} />
          <rect x={30.500} y={11} width={4.300} height={27} />
          <rect x={35.500} y={21} width={4.300} height={17} />
          <rect x={40.500} y={30} width={4.300} height={8} />
          <rect x={45.500} y={35.300} width={4.300} height={2.700} />
        </g>
      </Thumb>
      <Thumb>
        <rect x={6.800} y={18} width={7} height={4} fill={MINT} /><rect x={6.800} y={22} width={7} height={8} fill={GREEN} />
        <rect x={18.800} y={13} width={7} height={9} fill={MINT} /><rect x={18.800} y={22} width={7} height={5} fill={GREEN} />
        <rect x={30.800} y={16} width={7} height={8} fill={MINT} /><rect x={30.800} y={24} width={7} height={8} fill={GREEN} />
        <rect x={42.800} y={11} width={7} height={12} fill={MINT} /><rect x={42.800} y={23} width={7} height={5} fill={GREEN} />
        <path d="M8 10h5M10.300 10v23M8 33h5M20 8.300h5M22.300 8.300v27M20 35.300h5M32 7.300h5M34.300 7.300v29M32 36.300h5M44 5.300h5M46.300 5.300v32M44 37.300h5" stroke="#333" fill="none" />
      </Thumb>
      <Thumb>
        <g fill="#cfe5dc">
          <rect x={3.700} y={4} width={9} height={8} /><rect x={10.700} y={16} width={3} height={8} /><rect x={17.700} y={16} width={4} height={8} /><rect x={33} y={29} width={7} height={8} />
        </g>
        <g fill="#ffddc2">
          <rect x={19.700} y={4} width={4} height={8} /><rect x={35.700} y={4} width={2} height={8} /><rect x={43.700} y={16} width={8} height={8} /><rect x={18} y={29} width={2} height={8} />
        </g>
        <g fill="#fff0e0">
          <rect x={24.700} y={4} width={4} height={8} /><rect x={41.700} y={4} width={8} height={8} /><rect x={9} y={29} width={8} height={8} /><rect x={45.700} y={29} width={4} height={8} />
        </g>
        <g fill="#e4f2ec">
          <rect x={3.700} y={16} width={6} height={8} /><rect x={24.700} y={16} width={14} height={8} /><rect x={22} y={29} width={4} height={8} /><rect x={3.700} y={29} width={2} height={8} />
        </g>
      </Thumb>
      <Thumb>
        <rect x={4.700} y={5} width={46} height={7.300} fill="#f3f4f6" />
        <rect x={4.700} y={5} width={39.500} height={7.300} fill="#e8e8e8" />
        <rect x={4.700} y={5} width={28} height={7.300} fill="#dcdcdc" />
        <rect x={4.700} y={6.500} width={25} height={4.500} fill={GREEN} />
        <path d="M33 5v7.300" stroke="#222" />
        <rect x={4.700} y={16.700} width={46} height={8.300} fill="#f3f4f6" />
        <rect x={4.700} y={16.700} width={35} height={8.300} fill="#e8e8e8" />
        <rect x={4.700} y={16.700} width={20} height={8.300} fill="#dcdcdc" />
        <rect x={4.700} y={18.700} width={40} height={4.500} fill={GREEN} />
        <path d="M40.300 16.700v8.300" stroke="#222" />
        <rect x={4.700} y={29} width={46} height={8} fill="#f3f4f6" />
        <rect x={4.700} y={29} width={25} height={8} fill="#e8e8e8" />
        <rect x={4.700} y={31} width={21} height={4.500} fill={GREEN} />
        <path d="M46 29v8" stroke="#222" />
      </Thumb>
      <Thumb>
        <circle cx={15} cy={27.300} r={9.700} fill="#9bdab1" />
        <circle cx={25.700} cy={11} r={5} fill={GREEN} />
        <circle cx={16} cy={13.300} r={3.500} fill={GREEN} />
        <circle cx={35.300} cy={12} r={3} fill="#a3dcb6" />
        <circle cx={45.300} cy={16.700} r={6.700} fill="#ffbb78" />
        <circle cx={30} cy={21.700} r={5.700} fill="#ffbb78" />
        <circle cx={39.700} cy={27} r={3.800} fill="#f28e2b" />
        <circle cx={29.700} cy={33} r={4.300} fill={GREEN} />
      </Thumb>
    </div>
  );
}

function Pill2({ label, blue }: { label: string; blue?: boolean }) {
  return (
    <div className={`flex h-[20px] w-[48px] items-center justify-center rounded-full text-[12px] text-white/90 ${blue ? "bg-[#4a96b5]" : "bg-[#00b180]"}`}>
      {label}
    </div>
  );
}

function ShowMe() {
  return (
    <div className="absolute right-0 top-0 z-10 h-[555px] w-[195px] border-l border-[#d4d4d4] bg-[#fafafa] pl-[12px] pt-[15px] shadow-[0_2px_3px_rgba(0,0,0,0.35)]">
      <ThumbGrid />
      <div className="mt-[17px] text-[12px] leading-[20px] text-[#333]">
        <div className="pl-[2px]">{"对于符号地图\uFF0C尝试"}</div>
        <div className="mt-[5px] flex h-[20px] items-center pl-[2px]">
          <span>1 个地理</span>
          <span className="ml-[8px]"><Globe c="#666" /></span>
          <span className="ml-[7px]"><Pill2 blue label="维度" /></span>
        </div>
        <div className="mt-[8px] flex h-[20px] items-center pl-[2px]">
          <span>0 个或多个</span>
          <span className="ml-[5px]"><Pill2 blue label="维度" /></span>
        </div>
        <div className="mt-[8px] flex h-[20px] items-center pl-[2px]">
          <span>0 至 2 个</span>
          <span className="ml-[7px]"><Pill2 label="度量" /></span>
        </div>
        <div className="mt-[8px] w-[172px] pl-[2px] leading-[16px] text-[#999]">可以使用空间度量来代替地理维度</div>
      </div>
    </div>
  );
}

function Tooltip() {
  return (
    <div className="absolute left-[647px] top-[345px] z-20 h-[77px] w-[131px] border border-[#c8c8c8] bg-white pl-[8px] pt-[6px] font-['DejaVu_Sans','Noto_Sans_CJK_SC',sans-serif] text-[13px] leading-[20px] shadow-[1px_1px_3px_rgba(0,0,0,0.25)]">
      <div className="flex"><span className="w-[46px] text-[#aaa]">城市:</span><span className="font-bold text-[#333]">武汉</span></div>
      <div className="flex"><span className="w-[46px] text-[#aaa]">利润:</span><span className="text-[#333]">-¥37,176</span></div>
      <div className="flex"><span className="w-[47px] text-[#aaa]">销售额:</span><span className="text-[#333]">¥229,903</span></div>
    </div>
  );
}

function Shelf({ label, icon, className }: { label: string; icon: ReactNode; className: string }) {
  return (
    <div className={`flex h-[28px] border border-[#d4d4d4] bg-[#fafafa] ${className}`}>
      <div className="flex w-[125px] items-center gap-[7px] border-r border-[#d4d4d4] pl-[6px] text-[12px] text-[#444]">
        {icon}
        <span>{label}</span>
      </div>
    </div>
  );
}

export default function App() {
  return (
    <div className="relative flex h-[787px] w-[1444px] overflow-hidden bg-white font-['Noto_Sans_CJK_SC','Liberation_Sans',sans-serif]">
      {/* desktop behind the window */}
      <div className="w-[16px] shrink-0 overflow-hidden whitespace-nowrap bg-[#03102a] text-[13px] leading-[16px] text-white">
        <div className="mt-[66px] pl-[10px]">T</div>
        <div className="mt-[50px] pl-[10px]">超</div>
        <div className="mt-[69px] pl-[8px]">W</div>
        <div className="mt-[69px] pl-[10px]">H</div>
        <div className="mt-[235px] pl-[11px]">C</div>
        <div className="mt-[1px] pl-[12px]">M</div>
        <div className="mt-[51px] pl-[7px]">Co</div>
        <div className="mt-[2px] pl-[9px]">2</div>
        <div className="mt-[67px] pl-[8px]">Pl</div>
      </div>

      <div className="relative flex min-w-0 flex-1 flex-col">
        <div className="flex h-[20px] shrink-0 items-start overflow-hidden bg-white">
          <svg width={15} height={13} viewBox="0 0 15 13" className="ml-[9px]">
            <path d="M0 0v12.500h15V0" fill="#f4f8fb" stroke="#c4c4c4" />
            <path d="M7.500 1v9M3 5.500h9M4 2l7 7M11 2l-7 7" stroke="#4a94c4" strokeWidth={1} strokeDasharray="1.500 0.800" />
          </svg>
          <span className="ml-[5px] -mt-[4px] whitespace-nowrap text-[13px] leading-[18px] text-[#333]">Tableau - 工作簿 2</span>
          <div className="ml-auto flex items-start">
            <svg width={12} height={6} viewBox="0 0 12 6" className="mt-[1px]"><path d="M1 3.500h10" stroke="#333" /></svg>
            <svg width={11} height={9} viewBox="0 0 11 9" fill="none" stroke="#333" className="ml-[33px]"><path d="M.5 0v8.500h9V0" /></svg>
            <svg width={12} height={10} viewBox="0 0 12 10" fill="none" stroke="#333" className="ml-[35px] mr-[4px]"><path d="M1 0l9.500 9M10.500 0L1 9" /></svg>
          </div>
        </div>

        <div className="flex h-[22px] shrink-0 items-center bg-white pl-[8px] text-[12px] text-[#222]">
          <span>文件(F)</span>
          <span className="ml-[15px]">数据(D)</span>
          <span className="ml-[16px]">工作表(W)</span>
          <span className="ml-[18px]">仪表板(B)</span>
          <span className="ml-[15px]">故事(T)</span>
          <span className="ml-[17px]">分析(A)</span>
          <span className="ml-[16px]">地图(M)</span>
          <span className="ml-[18px]">设置格式(O)</span>
          <span className="ml-[17px]">窗口(N)</span>
          <span className="ml-[18px]">帮助(H)</span>
        </div>

        <Toolbar />

        <div className="relative flex min-h-0 flex-1 flex-col bg-[#f5f5f5]">
          <div className="flex min-h-0 flex-1">
            <DataPane />
            <MiddlePane />
            <div className="flex min-w-0 flex-1 flex-col gap-[6px]">
              <Shelf
                label="列"
                className="h-[28px]"
                icon={
                  <svg width={12} height={10} viewBox="0 0 12 10" stroke="#555" strokeWidth={2} fill="none"><path d="M2 1v1M2 3.500V10M6 1v1M6 3.500V10M10 1v1M10 3.500V10" /></svg>
                }
              />
              <Shelf
                label="行"
                className=""
                icon={
                  <svg width={12} height={10} viewBox="0 0 12 10" stroke="#555" strokeWidth={2} fill="none"><path d="M0 1.500h2M3 1.500h9M0 5h2M3 5h9M0 8.500h2M3 8.500h9" /></svg>
                }
              />
              <div className="h-[622px] w-[897px] border border-[#d4d4d4] border-t-[#b8b8b8] bg-white">
                <div className="flex h-[55px] items-center pl-[11px] pb-[6px] text-[20px] font-light text-[#666]">工作表 3</div>
                <div className="ml-[14px]"><Treemap /></div>
              </div>
            </div>
          </div>
          <div className="flex h-[8px] shrink-0 bg-[#e6e6e6]">
            <div className="w-[131px] border-r border-t border-[#d0d0d0]" />
            <div className="w-[60px] border-r border-t border-[#d0d0d0]" />
            <div className="w-[60px] border-r border-t border-[#d0d0d0]" />
            <div className="w-[60px] border-r border-t border-[#d0d0d0] bg-white" />
            <div className="w-[32px] border-r border-t border-[#d0d0d0]" />
            <div className="w-[64px] border-r border-t border-[#d0d0d0]" />
            <div className="flex-1 border-t border-[#d0d0d0]" />
          </div>
          <ShowMe />
        </div>
      </div>

      <Tooltip />
      <div className="absolute right-[8px] top-[757px] z-20 font-['Liberation_Sans',sans-serif] text-[15px] leading-[20px] text-[#c4c4c4]/70">https://blog.csdn.net/m0_46690684</div>
    </div>
  );
}
